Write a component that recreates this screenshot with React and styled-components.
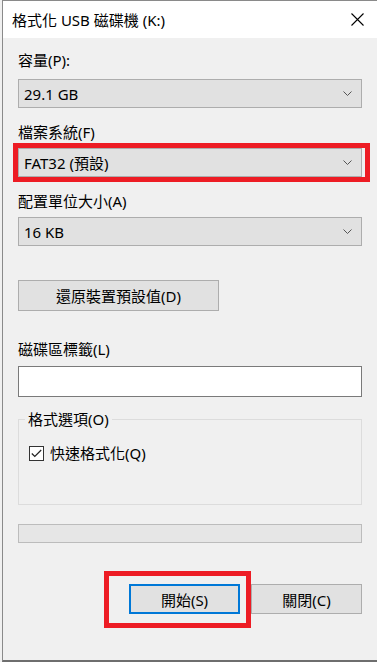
import styled, { createGlobalStyle } from 'styled-components';

const GlobalStyle = createGlobalStyle`
  html, body {
    margin: 0;
    padding: 0;
    background: #f0f0f0;
  }
  body {
    font-family: "Segoe UI", "Noto Sans", "Noto Sans CJK TC", sans-serif;
    font-size: 15px;
    color: #000;
  }
`;

const Window = styled.div`
  margin-left: 2px;
  height: 659px;
  border-top: 1px solid #8a8a8a;
  border-left: 1px solid #8a8a8a;
  border-bottom: 2px solid #6e6e6e;
  display: flex;
  flex-direction: column;
  background: #f0f0f0;
`;

const TitleBar = styled.div`
  height: 37px;
  background: #fff;
  display: flex;
  align-items: center;
  justify-content: space-between;
  padding: 0 13px 0 9px;
`;

const Title = styled.span`
  font-size: 15px;
  line-height: 20px;
  margin-top: 1px;
`;

const Body = styled.div`
  flex: 1;
  display: flex;
  flex-direction: column;
  padding: 12px 15px 0 15px;
`;

const Label = styled.div`
  line-height: 20px;
  margin-top: ${(p) => p.$top || 0}px;
  margin-bottom: ${(p) => p.$bottom || 6}px;
`;

const Combo = styled.div`
  height: 27px;
  border: 1px solid #adadad;
  background: #e1e1e1;
  display: flex;
  align-items: center;
  justify-content: space-between;
  padding: 0 9px 0 5px;
`;

const Highlight = styled.div`
  position: relative;

  &::after {
    content: '';
    position: absolute;
    left: ${(p) => p.$l}px;
    top: ${(p) => p.$t}px;
    right: ${(p) => p.$r}px;
    bottom: ${(p) => p.$b}px;
    border: 5px solid #ed1c24;
    pointer-events: none;
  }
`;

const Button = styled.button`
  font: inherit;
  color: #000;
  background: #e1e1e1;
  border: ${(p) => (p.$primary ? '2px solid #0078d7' : '1px solid #adadad')};
  width: ${(p) => p.$width || 111}px;
  height: ${(p) => p.$height || 30}px;
  padding: 0;
  margin: 0;
`;

const RestoreRow = styled.div`
  margin-top: 34px;
`;

const TextBox = styled.div`
  height: 29px;
  border: 1px solid #7a7a7a;
  background: #fff;
`;

const Group = styled.div`
  position: relative;
  box-sizing: border-box;
  height: 86px;
  border: 1px solid #dcdcdc;
  margin-top: 22px;
  padding: 23px 0 0 10px;
`;

const Legend = styled.span`
  position: absolute;
  left: 6px;
  top: -11px;
  padding: 0 3px;
  line-height: 20px;
  background: #f0f0f0;
`;

const CheckRow = styled.label`
  display: flex;
  align-items: center;
  gap: 6px;
  line-height: 20px;
`;

const CheckBox = styled.span`
  width: 13px;
  height: 13px;
  border: 1px solid #333;
  background: #fff;
  display: flex;
  align-items: center;
  justify-content: center;
`;

const Progress = styled.div`
  height: 17px;
  border: 1px solid #bcbcbc;
  background: #e6e6e6;
  margin-top: 19px;
`;

const ButtonRow = styled.div`
  display: flex;
  justify-content: flex-end;
  gap: 11px;
  margin-top: 41px;
`;

const Chevron = () => (
  <svg width="9" height="6" viewBox="0 0 9 6">
    <polyline points="0.5,0.5 4.5,4.5 8.5,0.5" fill="none" stroke="#555" strokeWidth="1" />
  </svg>
);

const CloseIcon = () => (
  <svg width="13" height="13" viewBox="0 0 13 13">
    <path d="M0.5 0.5 L12.5 12.5 M12.5 0.5 L0.5 12.5" stroke="#000" strokeWidth="1.1" />
  </svg>
);

export default function App() {
  return (
    <>
      <GlobalStyle />
      <Window>
        <TitleBar>
          <Title>格式化 USB 磁碟機 (K:)</Title>
          <CloseIcon />
        </TitleBar>
        <Body>
          <Label $bottom={9}>容量(P):</Label>
          <Combo>
            <span>29.1 GB</span>
            <Chevron />
          </Combo>

          <Label $top={14}>檔案系統(F)</Label>
          <Highlight $l={-5} $t={-5} $r={-8} $b={-5}>
            <Combo>
              <span>FAT32 (預設)</span>
              <Chevron />
            </Combo>
          </Highlight>

          <Label $top={14}>配置單位大小(A)</Label>
          <Combo>
            <span>16 KB</span>
            <Chevron />
          </Combo>

          <RestoreRow>
            <Button $width={201} $height={31}>還原裝置預設值(D)</Button>
          </RestoreRow>

          <Label $top={28} $bottom={7}>磁碟區標籤(L)</Label>
          <TextBox />

          <Group>
            <Legend>格式選項(O)</Legend>
            <CheckRow>
              <CheckBox>
                <svg width="11" height="9" viewBox="0 0 11 9">
                  <polyline points="0.8,4.5 3.8,7.5 10.2,1" fill="none" stroke="#222" strokeWidth="1.2" />
                </svg>
              </CheckBox>
              <span>快速格式化(Q)</span>
            </CheckRow>
          </Group>

          <Progress />

          <ButtonRow>
            <Highlight $l={-25} $t={-13} $r={-11} $b={-14}>
              <Button $primary>開始(S)</Button>
            </Highlight>
            <Button>關閉(C)</Button>
          </ButtonRow>
        </Body>
      </Window>
    </>
  );
}
